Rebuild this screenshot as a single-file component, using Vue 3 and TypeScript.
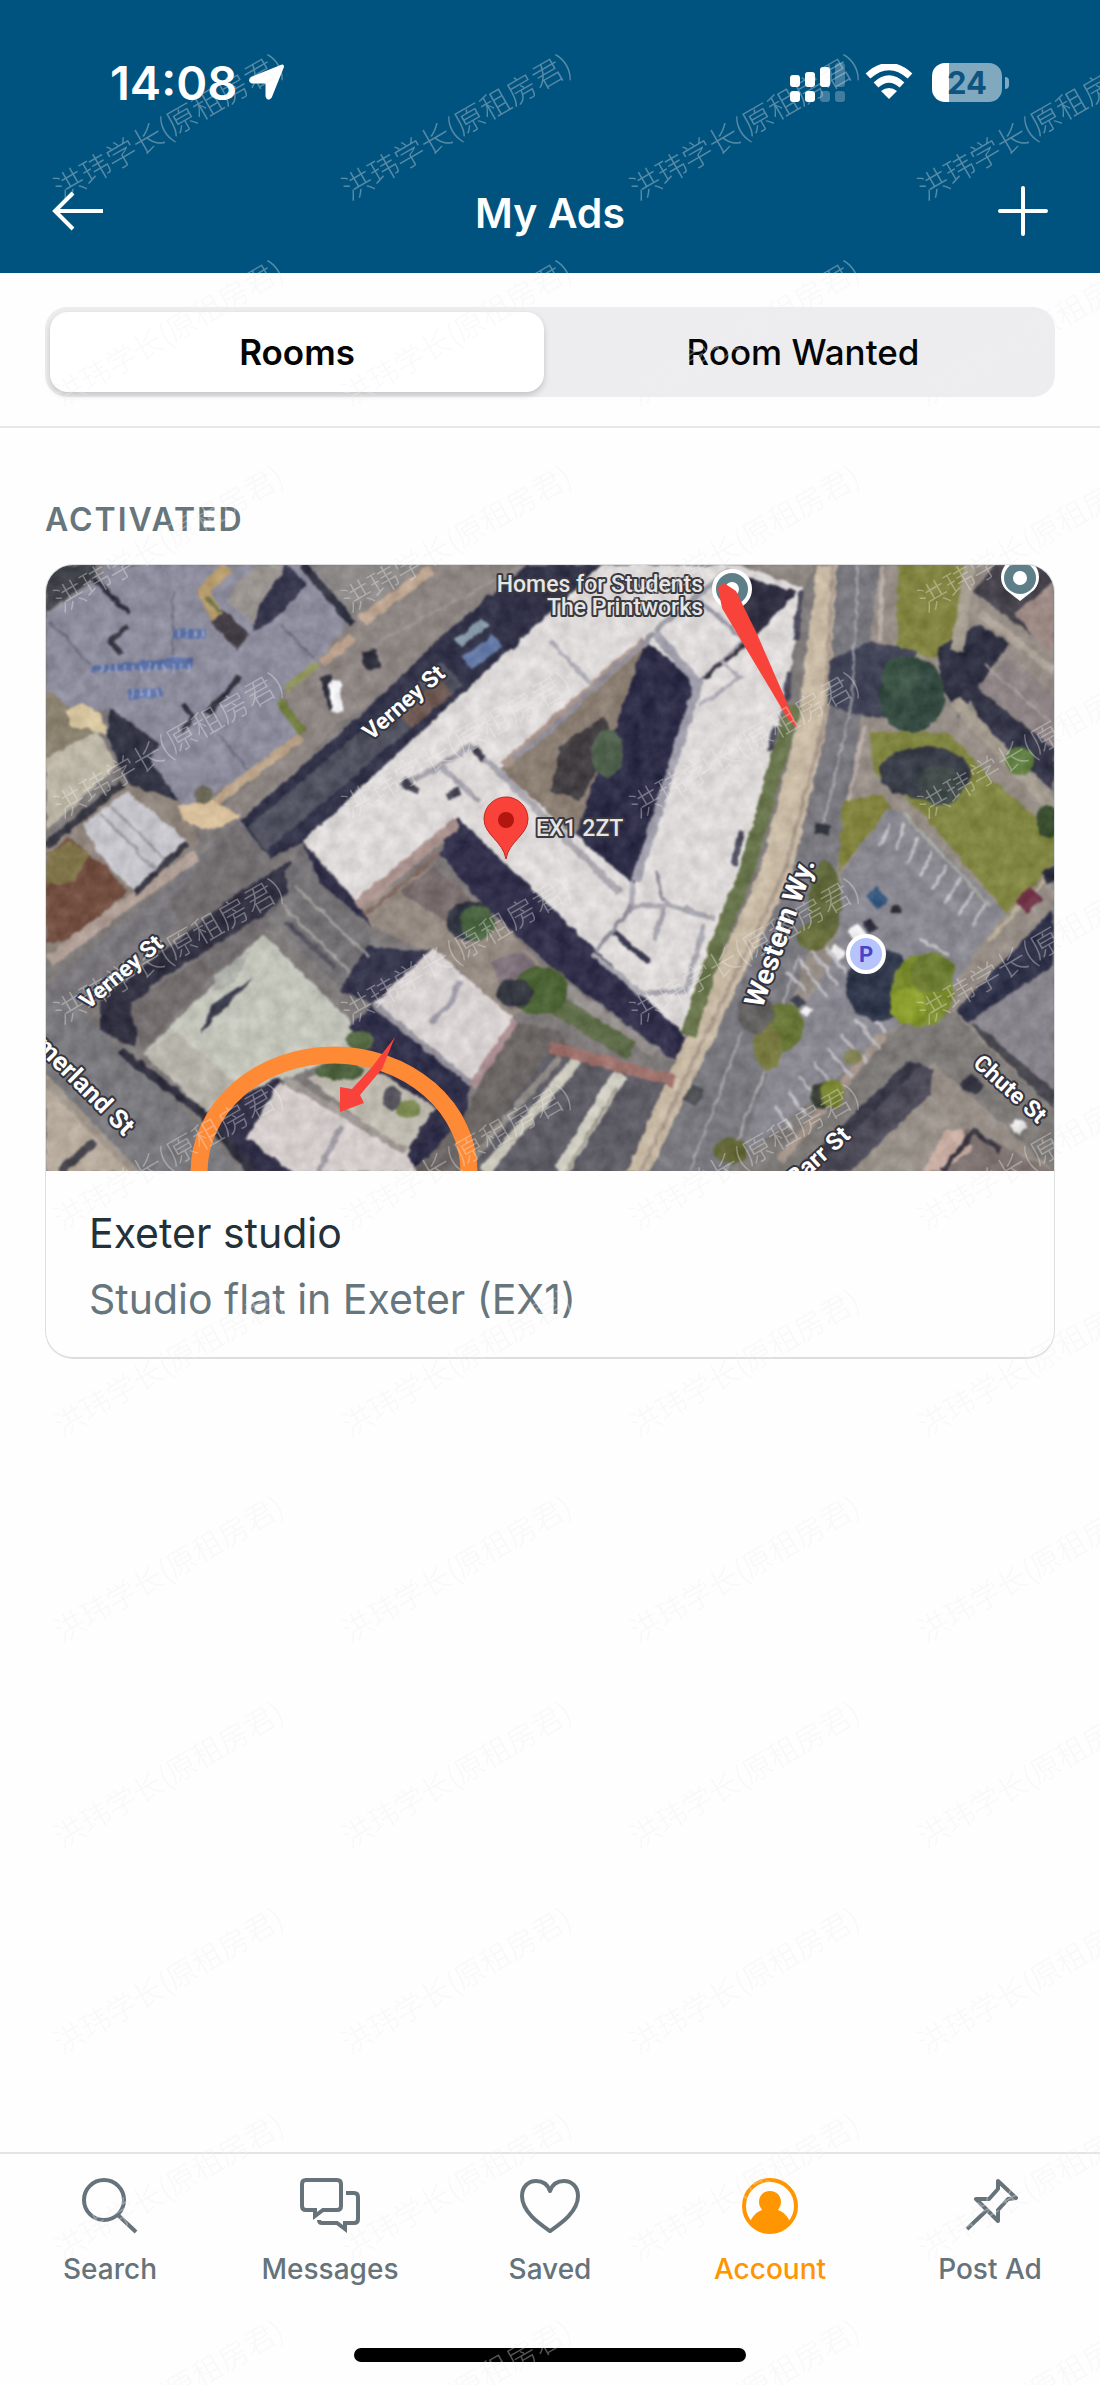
<script setup lang="ts">
import { ref } from 'vue'

type Shape = { d: string; f: string }
type Stroke = { d: string; c: string; w: number }

const segments = ['Rooms', 'Room Wanted']
const activeSegment = ref(0)

const tabs = [
  { id: 'search', label: 'Search' },
  { id: 'messages', label: 'Messages' },
  { id: 'saved', label: 'Saved' },
  { id: 'account', label: 'Account' },
  { id: 'post', label: 'Post Ad' },
]
const activeTab = ref('account')

// Ground, roads and roofs of the aerial view, painted back to front.
const ground: Shape[] = [
  { d: '46,564 97,564 93,577 46,612', f: '#3c3f45' },
  { d: '46,613 97,577 107,564 310,564 353,623 353,633 317,660 283,687 280,700 300,730 253,773 183,807 150,760 107,710 73,707 46,690', f: '#8b8a9b' },
  { d: '300,564 423,564 353,622', f: '#8a8786' },
  { d: '353,617 423,564 527,564 440,637 373,703 340,720 300,767 247,817 220,807 300,740 283,690 317,660', f: '#8b8380' },
  { d: '240,577 260,564 283,564 290,573 253,623 227,600', f: '#98928f' },
  { d: '287,564 307,583 273,620 253,630 257,608', f: '#34344a' },
  { d: '210,620 222,608 250,633 237,650', f: '#403a42' },
  { d: '46,690 73,707 97,730 46,757', f: '#877f6c' },
  { d: '46,757 97,730 117,765 46,830', f: '#bab4a4' },
  { d: '66,710 82,702 100,712 108,735 90,728 72,726', f: '#d3c29c' },
  { d: '110,707 160,743 150,757 180,803 150,807 123,773 107,733', f: '#303242' },
  { d: '46,845 123,782 180,800 200,840 187,850 60,960 46,960', f: '#8c827a' },
  { d: '83,823 127,790 187,840 150,880 133,890 100,855', f: '#c3c2c9' },
  { d: '46,853 70,837 105,865 127,890 80,937 46,943', f: '#704c3f' },
  { d: '46,853 70,840 90,852 75,880 46,885', f: '#7d7147' },
  { d: '46,985 170,885 238,820 270,857 200,905 80,1010 46,1005', f: '#77757a' },
  { d: '240,820 373,703 440,637 527,564 601,564 303,842 270,857', f: '#2f3046' },
  { d: '178,805 213,798 240,815 222,825 200,828 183,818', f: '#d4bc98' },
  { d: '237,822 270,857 300,877 263,933 213,973 190,940 170,900', f: '#716c6d' },
  { d: '100,1000 240,890 290,860 320,862 262,915 150,985 133,1047 100,1030', f: '#302f40' },
  { d: '130,1003 200,957 213,973 143,1050', f: '#706a6a' },
  { d: '300,877 380,943 370,973 337,987 267,920', f: '#7e7c7d' },
  { d: '46,985 80,1010 183,1107 240,1171 140,1171 46,1073', f: '#77777b' },
  { d: '46,1073 140,1171 46,1171', f: '#b5a99b' },
  { d: '263,933 353,1023 350,1047 313,1067 280,1080 220,1115 207,1110 143,1053', f: '#c0c1b7' },
  { d: '143,1053 207,1110 240,1085 175,1030', f: '#b3b0a7' },
  { d: '200,1033 253,977 213,1003', f: '#3b3c4c' },
  { d: '213,975 250,950 235,980 215,990', f: '#a8aaa4' },
  { d: '205,1112 280,1076 290,1086 247,1137 293,1171 250,1171', f: '#2f2e46' },
  { d: '357,903 433,865 500,920 555,978 510,1020 457,965 373,925', f: '#948980' },
  { d: '400,890 433,865 480,905 450,925', f: '#75696a' },
  { d: '490,960 525,950 550,985 510,1010', f: '#7d7079' },
  { d: '303,842 357,903 372,940 340,987 300,950 285,872', f: '#737073' },
  { d: '303,842 357,903 372,925 320,882', f: '#302e46' },
  { d: '367,945 420,950 433,947 373,1003 340,990', f: '#34344b' },
  { d: '350,1025 373,1003 470,1085 463,1130 407,1171 380,1100', f: '#2e2d47' },
  { d: '307,1077 360,1060 437,1107 407,1155', f: '#bcb8ad' },
  { d: '280,1080 407,1153 417,1171 293,1171 247,1137', f: '#d1cac9' },
  { d: '433,947 513,1017 470,1083 373,1003', f: '#d6cfcf' },
  { d: '513,1020 560,1030 570,1050 470,1171 415,1171 463,1115', f: '#6a6462' },
  { d: '550,1050 674,1085 628,1171 462,1171', f: '#5c5a63' },
  { d: '303,840 601,564 740,564 803,587 790,673 770,760 743,860 720,920 680,1047 460,828 357,902', f: '#dbd7d6' },
  { d: '457,815 480,838 680,1030 690,1050 675,1060 550,965 470,890 440,852', f: '#2f2d48' },
  { d: '645,638 698,683 635,885 500,768', f: '#2c2b46' },
  { d: '645,640 628,690 612,735 590,790 575,836 500,768', f: '#877b70' },
  { d: '560,745 605,715 612,740 580,800 550,790', f: '#403c40' },
  { d: '740,575 797,590 757,634 735,600', f: '#2f2d40' },
  { d: '740,564 817,564 803,587', f: '#8d857f' },
  { d: '614,928 652,960 645,962 612,934', f: '#35344a' },
  { d: '817,564 837,564 828,720 793,870 650,1171 626,1171 760,870 798,720', f: '#c5b7a2' },
  { d: '837,564 880,564 873,700 848,840 740,1171 650,1171 793,870 828,720', f: '#77767d' },
  { d: '880,564 1054,564 1054,1171 735,1171 845,840', f: '#938b84' },
  { d: '898,564 963,564 960,640 937,657 897,647', f: '#80833f' },
  { d: '870,730 950,733 993,780 1054,830 1054,862 1007,912 917,807 873,773', f: '#808441' },
  { d: '843,800 883,793 890,807 855,850 838,872', f: '#7e803b' },
  { d: '828,660 870,640 917,650 900,720 850,712 828,704', f: '#3e4154' },
  { d: '937,647 980,623 1010,643 977,687 960,717 943,687', f: '#2e2f40' },
  { d: '973,590 995,564 1054,564 1054,640 1030,633', f: '#44414b' },
  { d: '1015,612 1054,580 1054,655 1028,630', f: '#9b8883' },
  { d: '977,687 1007,655 1054,693 1054,750', f: '#8b8182' },
  { d: '968,695 977,687 1054,748 1054,790 985,730', f: '#333446' },
  { d: '888,807 905,812 1007,912 983,940 945,1000 883,1032 800,1133 760,1171 735,1171 765,1080 800,1010 832,960 842,872', f: '#87868e' },
  { d: '907,1020 953,1012 1054,1110 1054,1171 1005,1125 933,1062 810,1171 725,1171', f: '#7c7876' },
  { d: '1053,908 1053,965 967,1022 955,1010', f: '#30324a' },
  { d: '967,1022 1054,965 1054,1100', f: '#85828a' },
  { d: '967,1022 985,1030 1054,1090 1054,1108', f: '#48474f' },
  { d: '910,1060 934,1068 930,1093 850,1171 800,1171', f: '#4c4956' },
  { d: '800,1165 908,1060 922,1064 812,1171 800,1171', f: '#393846' },
  { d: '934,1095 967,1127 927,1171 855,1171', f: '#969089' },
  { d: '967,1127 1054,1171 925,1171', f: '#7b706d' },
  { d: '945,1130 962,1127 972,1150 940,1171 922,1171', f: '#c4aa9f' },
]

const strokes: Stroke[] = [
  { d: 'M93 577L130 613', c: '#2f3040', w: 5 },
  { d: 'M128 625L110 641L121 653', c: '#33343f', w: 5 },
  { d: 'M50 620L90 663M280 623L313 657M217 733L250 770M173 590V655', c: '#6d6c80', w: 2 },
  { d: 'M303 564L353 623', c: '#2f3040', w: 8 },
  { d: 'M228 566L203 590L218 616', c: '#b29868', w: 12 },
  { d: 'M206 596L220 612', c: '#6d7040', w: 5 },
  { d: 'M240 676L207 713', c: '#30313d', w: 6 },
  { d: 'M183 703L193 717L182 730', c: '#30313d', w: 5 },
  { d: 'M362 620L432 568', c: '#bba490', w: 12 },
  { d: 'M353 636L322 662', c: '#b69c88', w: 9 },
  { d: 'M380 640L520 566', c: '#98908c', w: 3 },
  { d: 'M317 663L286 688', c: '#8d935a', w: 8 },
  { d: 'M279 700L303 732', c: '#707d3e', w: 8 },
  { d: 'M300 736L216 800', c: '#b7a085', w: 9 },
  { d: 'M123 782L46 845', c: '#35353f', w: 8 },
  { d: 'M100 812L155 868M110 804L165 858', c: '#9b9ba3', w: 3 },
  { d: 'M50 960L130 900L196 855', c: '#ab9b92', w: 12 },
  { d: 'M187 842L135 892', c: '#383743', w: 6 },
  { d: 'M257 838L452 672', c: '#4e505d', w: 30 },
  { d: 'M405 722L446 686', c: '#6c5751', w: 18 },
  { d: 'M467 662L498 640', c: '#6277a3', w: 15 },
  { d: 'M458 642L486 620', c: '#8496a4', w: 9 },
  { d: 'M325 676L334 708', c: '#2c2c38', w: 11 },
  { d: 'M334 680L338 711', c: '#f1f0f3', w: 11 },
  { d: 'M369 650L373 668', c: '#2c2c39', w: 15 },
  { d: 'M120 1050L203 1113L253 1171', c: '#302f3d', w: 9 },
  { d: 'M46 1080L135 1171', c: '#9e9389', w: 8 },
  { d: 'M60 1171L95 1140', c: '#43414a', w: 8 },
  { d: 'M295 885L368 955M283 905L350 972', c: '#a09d9b', w: 3 },
  { d: 'M286 921L335 966', c: '#55525f', w: 5 },
  { d: 'M357 905L457 822', c: '#a8918c', w: 12 },
  { d: 'M364 914L440 852', c: '#7f6860', w: 4 },
  { d: 'M373 1003L470 1082', c: '#96929c', w: 6 },
  { d: 'M515 1020L473 1085', c: '#a78b8e', w: 8 },
  { d: 'M430 1022L450 1003L460 980', c: '#9d9aa8', w: 5 },
  { d: 'M285 1078L405 1150', c: '#9a938f', w: 7 },
  { d: 'M342 1125L318 1171', c: '#9c98a0', w: 6 },
  { d: 'M440 1110L412 1150', c: '#2e2d45', w: 11 },
  { d: 'M578 1058L484 1171', c: '#c5c2b6', w: 11 },
  { d: 'M560 1056L466 1165', c: '#8d8984', w: 7 },
  { d: 'M620 1073L560 1171', c: '#cbc9be', w: 15 },
  { d: 'M617 1086L566 1171', c: '#a09c8e', w: 3 },
  { d: 'M550 1046L674 1080', c: '#9b6f69', w: 12 },
  { d: 'M550 977L655 1052', c: '#928d8a', w: 11 },
  { d: 'M545 997L632 1050', c: '#5e6b48', w: 20 },
  { d: 'M645 640L503 765', c: '#a7928a', w: 9 },
  { d: 'M655 632L698 683L636 880', c: '#9d9ca8', w: 9 },
  { d: 'M500 772L620 892', c: '#a9a6ae', w: 7 },
  { d: 'M655 632L590 690L550 730L512 758', c: '#8f8d99', w: 5 },
  { d: 'M655 630L730 568', c: '#9a98a2', w: 5 },
  { d: 'M700 680L745 640L700 600', c: '#94929f', w: 4 },
  { d: 'M704 678L746 642', c: '#33323f', w: 4 },
  { d: 'M550 640L590 682M700 705L740 676L722 660', c: '#aaa8b2', w: 4 },
  { d: 'M400 785L440 765L480 800M440 765L470 745L520 790', c: '#a3a1aa', w: 5 },
  { d: 'M402 780L418 790M446 796L460 790M474 748L484 758', c: '#3f3e4c', w: 8 },
  { d: 'M632 880L632 905L664 905L655 940M664 902L716 918M592 952L640 992L686 990L704 925', c: '#a5a3ab', w: 5 },
  { d: 'M596 950L616 925L632 905M655 870L664 900', c: '#8e8c98', w: 4 },
  { d: 'M801 590L796 640M790 670L786 700M775 725L770 750M742 830L734 865', c: '#4b4a5c', w: 6 },
  { d: 'M794 705L772 780L748 865L715 950L688 1035', c: '#67734a', w: 15 },
  { d: 'M833 564L825 720L785 870L640 1171', c: '#a99a8d', w: 4 },
  { d: 'M858 564L852 700L822 830', c: '#a5a4a9', w: 2 },
  { d: 'M742 1030L690 1171', c: '#a5a4a9', w: 2 },
  { d: 'M882 564L880 640M865 725L848 800', c: '#b5a9a4', w: 4 },
  { d: 'M798 955L780 1015M765 1070L725 1171', c: '#adabaa', w: 2 },
  { d: 'M970 564L957 650', c: '#a49d90', w: 12 },
  { d: 'M980 612L1054 670', c: '#aba096', w: 8 },
  { d: 'M985 664L1050 720', c: '#a79c98', w: 2 },
  { d: 'M955 700L1054 808', c: '#a49b8f', w: 13 },
  { d: 'M903 812L990 905', c: '#a8a69e', w: 3 },
  { d: 'M988 940L1054 870', c: '#b6a994', w: 4 },
  { d: 'M884 1034L780 1160', c: '#a39489', w: 8 },
  { d: 'M1048 868L1054 880', c: '#2d2c3f', w: 16 },
  { d: 'M1022 906L1036 892', c: '#6e3146', w: 17 },
  { d: 'M965 1078L980 1090', c: '#33323f', w: 15 },
  { d: 'M1012 1120L1024 1130', c: '#e6e3e4', w: 12 },
  { d: 'M872 902L882 892', c: '#37587f', w: 18 },
  { d: 'M896 905V912', c: '#2c2b33', w: 9 },
  { d: 'M852 926L862 938', c: '#f2f1f3', w: 13 },
  { d: 'M832 948L842 956', c: '#eae8ea', w: 11 },
  { d: 'M866 920L874 930', c: '#2d2d3d', w: 10 },
  { d: 'M794 996L802 1005', c: '#3d4150', w: 12 },
  { d: 'M804 1007L809 1013', c: '#e9e7ea', w: 9 },
  { d: 'M823 822L821 834', c: '#32353e', w: 15 },
  { d: 'M698 1086L690 1102', c: '#494b50', w: 15 },
  { d: 'M942 1170L975 1130L1000 1150', c: '#38343f', w: 5 },
]

// Parking bay markings as start and end points.
const bays = [
  [890, 822, 880, 845], [904, 822, 896, 850], [918, 836, 908, 862], [932, 850, 920, 876],
  [946, 864, 932, 890], [960, 878, 946, 902], [974, 890, 958, 914], [986, 902, 972, 924],
  [800, 958, 826, 996], [812, 950, 838, 984], [826, 946, 850, 976], [786, 970, 806, 990],
  [856, 1018, 880, 1048], [842, 1034, 866, 1062], [828, 1048, 852, 1076], [814, 1062, 838, 1090],
  [800, 1076, 822, 1102], [788, 1090, 806, 1114], [776, 1106, 792, 1128], [868, 1008, 886, 1032],
  [920, 938, 950, 954], [870, 980, 850, 960],
]

// x, y, rx, ry, colour
const trees: [number, number, number, number, string][] = [
  [470, 920, 24, 20, '#2f3340'], [477, 922, 17, 18, '#4a6340'], [540, 990, 28, 24, '#4a6133'],
  [515, 992, 18, 14, '#33353f'], [607, 752, 16, 24, '#4d5e4a'], [360, 1040, 14, 10, '#566b45'],
  [340, 1070, 24, 9, '#4c5f3c'], [408, 1108, 12, 9, '#7c8852'], [392, 1097, 9, 12, '#55525c'],
  [203, 794, 9, 10, '#686554'], [912, 694, 33, 38, '#33493f'], [900, 675, 18, 20, '#3b5345'],
  [925, 772, 46, 26, '#363b46'], [940, 784, 22, 20, '#3f4747'], [1020, 760, 14, 14, '#5d7b3f'],
  [1048, 820, 12, 16, '#35492b'], [825, 900, 16, 40, '#5e6639'], [813, 935, 16, 14, '#666d3b'],
  [880, 984, 34, 36, '#30364a'], [922, 990, 31, 36, '#788a2c'], [932, 972, 22, 20, '#6b7b32'],
  [908, 1005, 18, 18, '#8a9c2c'], [783, 1026, 20, 24, '#667436'], [768, 1045, 14, 24, '#76783f'],
  [824, 1094, 14, 13, '#373c33'], [832, 1093, 12, 14, '#76822d'], [731, 1150, 16, 13, '#626637'],
  [755, 1012, 18, 20, '#62605f'], [853, 1056, 8, 8, '#7e7d50'],
]

const solar = ['173,629 206,627 206,638 173,638', '91,664 193,656 193,667 92,671', '128,689 162,686 163,697 129,698']

const labels = [
  { t: 'Verney St', x: 371, y: 740, r: -41, s: 23 },
  { t: 'Verney St', x: 88, y: 1009, r: -40, s: 23 },
  { t: 'Western Wy.', x: 762, y: 1008, r: -70, s: 28 },
  { t: 'merland St', x: 34, y: 1046, r: 45, s: 26 },
  { t: 'Chute St', x: 972, y: 1064, r: 42, s: 23 },
  { t: 'Barr St', x: 796, y: 1186, r: -42, s: 24 },
]
</script>

<template>
  <div class="screen">
    <header class="top">
      <div class="status">
        <div class="clock">
          <span>14:08</span>
          <svg width="38" height="38" viewBox="0 0 38 38" aria-hidden="true">
            <path d="M34 3.500L22 33.500Q20.500 36 19.500 33V20.500Q19.500 18.500 17.500 18.500H4.500Q1.500 17.500 4.500 15.500Z" fill="#fff" stroke="#fff" stroke-width="4" stroke-linejoin="round" />
          </svg>
        </div>
        <div class="indicators">
          <svg width="56" height="40" viewBox="0 0 56 40" fill="#fff" aria-hidden="true">
            <rect x="0" y="13" width="10" height="12" rx="3" />
            <rect x="15" y="10" width="10" height="15" rx="3" />
            <rect x="30" y="5" width="10" height="20" rx="3" />
            <rect x="45" y="1" width="10" height="24" rx="3" opacity=".25" />
            <rect x="0" y="29" width="10" height="11" rx="3" />
            <rect x="15" y="29" width="10" height="11" rx="3" />
            <rect x="30" y="29" width="10" height="11" rx="3" opacity=".25" />
            <rect x="45" y="29" width="10" height="11" rx="3" opacity=".25" />
          </svg>
          <svg width="48" height="36" viewBox="0 0 48 36" aria-hidden="true">
            <path d="M3 12Q24 -7 45 12M11 21Q24 9 37 21" fill="none" stroke="#fff" stroke-width="7" />
            <path d="M24 35L16 27Q24 21 32 27Z" fill="#fff" />
          </svg>
          <div class="battery"><span>24</span></div>
        </div>
      </div>
      <div class="nav">
        <button type="button" class="icon-button" aria-label="Back">
          <svg width="52" height="40" viewBox="0 0 52 40" fill="none" stroke="#fff" stroke-width="4">
            <path d="M51 20H3M21 2L3 20L21 38" />
          </svg>
        </button>
        <h1>My Ads</h1>
        <button type="button" class="icon-button end" aria-label="Add an ad">
          <svg width="50" height="50" viewBox="0 0 50 50" stroke="#fff" stroke-width="4" stroke-linecap="round">
            <path d="M25 2V48M2 25H48" />
          </svg>
        </button>
      </div>
    </header>

    <div class="filter">
      <div class="segmented">
        <button
          v-for="(name, i) in segments"
          :key="name"
          type="button"
          :class="{ active: i === activeSegment }"
          :aria-pressed="i === activeSegment"
          @click="activeSegment = i"
        >{{ name }}</button>
      </div>
    </div>

    <main>
      <h2>ACTIVATED</h2>
      <article class="card">
        <svg class="map" viewBox="46 564 1008 606" preserveAspectRatio="xMidYMid slice" role="img" aria-label="Aerial map of EX1 2ZT">
          <defs>
            <!-- roughens the edges of the terrain and speckles its surfaces -->
            <filter id="terrain" x="0" y="0" width="100%" height="100%" color-interpolation-filters="sRGB">
              <feTurbulence type="fractalNoise" baseFrequency="0.1" numOctaves="2" seed="4" result="warp" />
              <feDisplacementMap in="SourceGraphic" in2="warp" scale="6" xChannelSelector="R" yChannelSelector="G" result="rough" />
              <feGaussianBlur in="rough" stdDeviation="1" result="photo" />
              <feTurbulence type="fractalNoise" baseFrequency="0.07" numOctaves="3" seed="9" />
              <feColorMatrix type="matrix" values="1 0 0 0 0  1 0 0 0 0  1 0 0 0 0  0 0 0 0 1" result="grain" />
              <feComposite in="photo" in2="grain" operator="arithmetic" k1="0" k2="1" k3="0.16" k4="-0.07" />
            </filter>
          </defs>
          <g filter="url(#terrain)">
            <rect x="36" y="554" width="1028" height="627" fill="#7d7878" />
            <polygon v-for="(g, i) in ground" :key="'g' + i" :points="g.d" :fill="g.f" />
            <path v-for="(s, i) in strokes" :key="'s' + i" :d="s.d" :stroke="s.c" :stroke-width="s.w" fill="none" />
            <polygon v-for="p in solar" :key="p" :points="p" fill="#5a70a6" />
            <path d="M100 667H192M178 633H205M132 692H162" stroke="#98a3c4" stroke-width="8" stroke-dasharray="2 6" />
            <line v-for="(b, i) in bays" :key="'b' + i" :x1="b[0]" :y1="b[1]" :x2="b[2]" :y2="b[3]" stroke="#bdbbc0" stroke-width="3" />
            <ellipse v-for="(t, i) in trees" :key="'t' + i" :cx="t[0]" :cy="t[1]" :rx="t[2]" :ry="t[3]" :fill="t[4]" />
          </g>

          <path d="M199 1171A135 117 0 0 1 469 1171" fill="none" stroke="#ff8a36" stroke-width="17" />
          <polygon points="395,1036 382,1068 360,1094 364,1102 340,1111 340,1086 352,1088 372,1066" fill="#f9423a" />

          <circle cx="732" cy="588" r="18" fill="#5f7f88" stroke="#fff" stroke-width="4" />
          <circle cx="732" cy="588" r="7" fill="#fff" />
          <path d="M1020 600L1006 589A19 19 0 1 1 1034 589Z" fill="#fff" />
          <circle cx="1020" cy="577" r="16" fill="#5f7f88" />
          <circle cx="1020" cy="577" r="7" fill="#fff" />
          <polygon points="718,587 724,582 736,590 757,633 798,727 788,718 722,607" fill="#f7433a" />

          <circle cx="866" cy="953" r="18" fill="#b7c3fb" stroke="#fff" stroke-width="4" />
          <text x="866" y="961" text-anchor="middle" class="parking">P</text>

          <path d="M506 858C503 840 484 834 484 818A22 22 0 0 1 528 818C528 834 509 840 506 858Z" fill="#f9423a" stroke="#c2281f" stroke-width="1" />
          <circle cx="506" cy="819" r="8" fill="#b3160f" />

          <g class="place">
            <text x="703" y="591" text-anchor="end">Homes for Students</text>
            <text x="703" y="614" text-anchor="end">The Printworks</text>
            <text x="536" y="835">EX1 2ZT</text>
          </g>
          <g class="street">
            <text v-for="(l, i) in labels" :key="'l' + i" :font-size="l.s" :transform="`translate(${l.x} ${l.y}) rotate(${l.r})`">{{ l.t }}</text>
          </g>
        </svg>
        <div class="caption">
          <h3>Exeter studio</h3>
          <p>Studio flat in Exeter (EX1)</p>
        </div>
      </article>
    </main>

    <footer>
      <nav class="tabs" aria-label="Main">
        <a v-for="tab in tabs" :key="tab.id" :href="'#' + tab.id" :class="{ active: tab.id === activeTab }" @click.prevent="activeTab = tab.id">
          <svg v-if="tab.id === 'search'" width="56" height="56" viewBox="0 0 56 56" fill="none" stroke="currentColor" stroke-width="4">
            <circle cx="22" cy="22" r="20" />
            <path d="M36 37L54 54" />
          </svg>
          <svg v-else-if="tab.id === 'messages'" width="60" height="56" viewBox="0 0 60 56" fill="none" stroke="currentColor" stroke-width="4">
            <path d="M6 2H37Q41 2 41 6V28Q41 32 37 32H23L15 38V32H6Q2 32 2 28V6Q2 2 6 2Z" />
            <path d="M46 15H54Q58 15 58 19V41Q58 45 54 45H45V51L37 45H22Q19 45 19 42" />
          </svg>
          <svg v-else-if="tab.id === 'saved'" width="60" height="56" viewBox="0 0 60 56" fill="none" stroke="currentColor" stroke-width="4">
            <path d="M30 53C20 46 2 34 2 18C2 8 9 3 16 3C23 3 28 7 30 13C32 7 37 3 44 3C51 3 58 8 58 18C58 34 40 46 30 53Z" stroke-linejoin="round" />
          </svg>
          <svg v-else-if="tab.id === 'account'" width="56" height="56" viewBox="0 0 56 56">
            <circle cx="28" cy="28" r="26" fill="none" stroke="currentColor" stroke-width="4" />
            <path d="M28 13C35 13 39 18 39 24C39 28 37 30 36 32C42 34 46 39 48 44C43 51 36 55 28 55C20 55 13 51 8 44C10 39 14 34 20 32C19 30 17 28 17 24C17 18 21 13 28 13Z" fill="currentColor" />
          </svg>
          <svg v-else width="56" height="56" viewBox="0 0 56 56" fill="none" stroke="currentColor" stroke-width="4" stroke-linejoin="round">
            <path d="M36 3L54 20L46 21L36 32V43L14 21H27L36 11ZM25 32L5 51" />
          </svg>
          <span>{{ tab.label }}</span>
        </a>
      </nav>
      <div class="home-bar"></div>
    </footer>

    <svg class="watermark" width="100%" height="100%" aria-hidden="true">
      <defs>
        <pattern id="mark" x="0" y="50" width="288" height="206" patternUnits="userSpaceOnUse">
          <text transform="translate(62 151) rotate(-30)">洪玮学长(原租房君)</text>
        </pattern>
      </defs>
      <rect y="50" width="100%" height="100%" fill="url(#mark)" />
    </svg>
  </div>
</template>

<style>
body {
  margin: 0;
  background: #fefefe;
}
</style>

<style scoped>
.screen {
  position: relative;
  display: flex;
  flex-direction: column;
  min-height: 100vh;
  overflow: hidden;
  background: #fefefe;
  font-family: Inter, "Liberation Sans", sans-serif;
}
h1, h2, h3, p {
  margin: 0;
}
button {
  border: 0;
  padding: 0;
  background: none;
  color: inherit;
  font: inherit;
  cursor: pointer;
}
svg {
  display: block;
}
.top {
  background: #00527f;
  color: #fff;
}
.status {
  display: flex;
  align-items: center;
  justify-content: space-between;
  box-sizing: border-box;
  height: 148px;
  padding: 16px 98px 0 110px;
}
.clock {
  display: flex;
  align-items: center;
  gap: 11px;
  font-size: 47px;
  font-weight: 600;
}
.indicators {
  display: flex;
  align-items: center;
  gap: 19px;
}
.battery {
  position: relative;
  width: 70px;
  height: 39px;
  border-radius: 13px;
  background: linear-gradient(90deg, #fff 17px, #80a8bf 17px);
  color: #0d5480;
  font-size: 31px;
  font-weight: 700;
  line-height: 39px;
  text-align: center;
}
.battery::after {
  content: "";
  position: absolute;
  top: 14px;
  right: -7px;
  width: 4px;
  height: 12px;
  border-radius: 0 4px 4px 0;
  background: #80a8bf;
}
.nav {
  display: grid;
  grid-template-columns: 1fr auto 1fr;
  align-items: center;
  height: 125px;
  padding: 0 52px;
}
.nav h1 {
  padding-top: 4px;
  font-size: 41px;
  font-weight: 600;
}
.icon-button {
  justify-self: start;
}
.icon-button.end {
  justify-self: end;
}
.filter {
  padding: 34px 45px 29px;
  border-bottom: 2px solid #e8e8e8;
}
.segmented {
  display: grid;
  grid-template-columns: 1fr 1fr;
  gap: 12px;
  box-sizing: border-box;
  height: 90px;
  padding: 5px;
  border-radius: 22px;
  background: #ededf0;
}
.segmented button {
  border-radius: 18px;
  color: #050505;
  font-size: 35px;
  font-weight: 500;
}
.segmented .active {
  background: #fff;
  box-shadow: 0 3px 6px rgba(0, 0, 0, .18);
  font-weight: 600;
}
main {
  flex: 1;
  padding: 72px 45px 40px;
}
h2 {
  margin-bottom: 24px;
  color: #67757c;
  font-size: 32px;
  font-weight: 600;
  letter-spacing: 2px;
  line-height: 40px;
}
.card {
  overflow: hidden;
  border: 1px solid #dcdedf;
  border-bottom-width: 2px;
  border-radius: 28px;
}
.map {
  width: 100%;
  height: auto;
  font-family: Roboto, sans-serif;
}
.place {
  fill: #e6e5e6;
  stroke: #3a3940;
  stroke-width: 4px;
  stroke-linejoin: round;
  paint-order: stroke;
  font-size: 23px;
  font-weight: 500;
}
.street {
  fill: #fff;
  stroke: #333440;
  stroke-width: 4px;
  stroke-linejoin: round;
  paint-order: stroke;
  font-weight: 700;
}
.parking {
  fill: #4a43c8;
  font-size: 22px;
  font-weight: 700;
}
.caption {
  padding: 29px 43px 25px;
  font-size: 41px;
  line-height: 66px;
}
.caption h3 {
  color: #22313a;
  font-size: 41px;
  font-weight: 400;
}
.caption p {
  color: #67757c;
}
footer {
  border-top: 2px solid #e4e4e5;
  padding: 24px 0 23px;
}
.tabs {
  display: grid;
  grid-template-columns: repeat(5, 1fr);
  margin-bottom: 63px;
}
.tabs a {
  display: flex;
  flex-direction: column;
  align-items: center;
  gap: 19px;
  color: #66737a;
  font-size: 28px;
  font-weight: 500;
  line-height: 32px;
  text-decoration: none;
}
.tabs .active {
  color: #ff9500;
}
.home-bar {
  width: 392px;
  height: 14px;
  margin: 0 auto;
  border-radius: 7px;
  background: #000;
}
.watermark {
  position: absolute;
  inset: 0;
  pointer-events: none;
}
.watermark text {
  fill: rgba(238, 238, 238, .36);
  font-family: "Noto Sans CJK SC", sans-serif;
  font-size: 30px;
  font-weight: 300;
}
</style>
